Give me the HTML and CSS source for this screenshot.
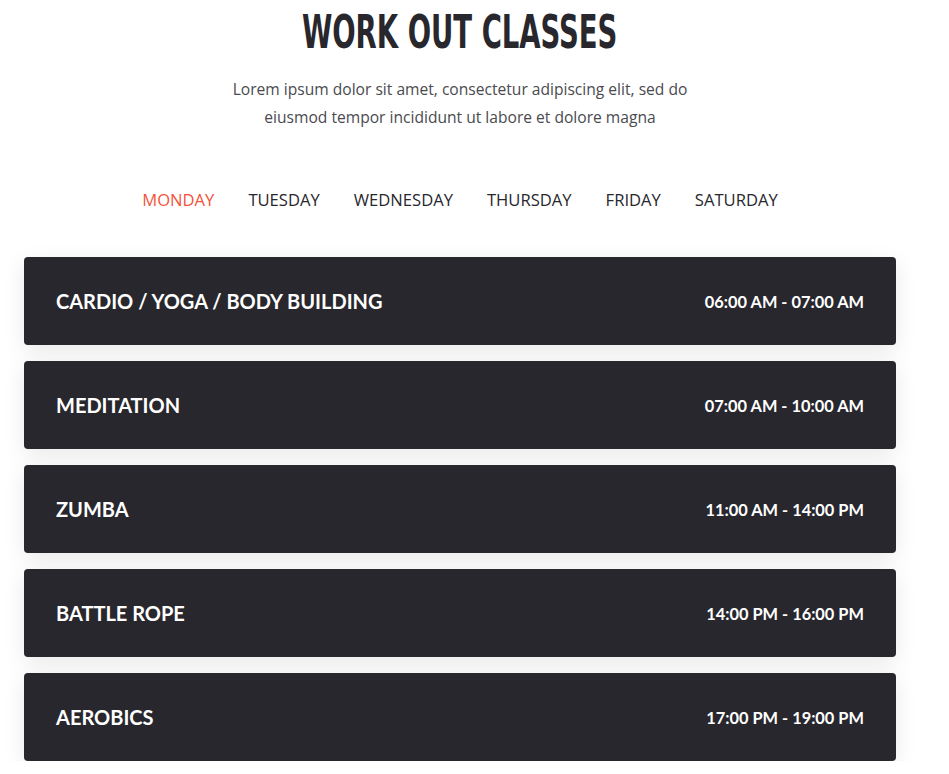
FILE: index.html
```html
<!DOCTYPE html>
<html lang="en">
<head>
<meta charset="utf-8">
<title>Work Out Classes</title>
<link rel="stylesheet" href="styles.css">
</head>
<body>
<section class="schedule">
  <header class="schedule-head">
    <h2 class="title"><span class="title-text">WORK OUT CLASSES</span></h2>
    <p class="lead">Lorem ipsum dolor sit amet, consectetur adipiscing elit, sed do<br>eiusmod tempor incididunt ut labore et dolore magna</p>
  </header>
  <nav class="days">
    <a class="day active">MONDAY</a>
    <a class="day">TUESDAY</a>
    <a class="day">WEDNESDAY</a>
    <a class="day">THURSDAY</a>
    <a class="day">FRIDAY</a>
    <a class="day">SATURDAY</a>
  </nav>
  <div class="classes">
    <div class="class-row"><span class="class-name">CARDIO / YOGA / BODY BUILDING</span><span class="class-time">06:00 AM - 07:00 AM</span></div>
    <div class="class-row"><span class="class-name">MEDITATION</span><span class="class-time">07:00 AM - 10:00 AM</span></div>
    <div class="class-row"><span class="class-name">ZUMBA</span><span class="class-time">11:00 AM - 14:00 PM</span></div>
    <div class="class-row"><span class="class-name">BATTLE ROPE</span><span class="class-time">14:00 PM - 16:00 PM</span></div>
    <div class="class-row"><span class="class-name">AEROBICS</span><span class="class-time">17:00 PM - 19:00 PM</span></div>
  </div>
</section>
</body>
</html>
```
FILE: styles.css
```css
* { box-sizing: border-box; }
html, body { margin: 0; padding: 0; background: #fff; }
body { font-family: "Open Sans", "Lato", sans-serif; color: #28272d; }

.schedule {
  width: 872px;
  margin-left: 24px;
  padding-top: 6px;
}

.schedule-head { text-align: center; }

.title {
  margin: 0;
  font-family: "Liberation Sans Narrow", "DejaVu Sans Condensed", sans-serif;
  font-weight: 700;
  font-size: 47px;
  line-height: 52px;
  color: #28272d;
}
.title-text {
  display: inline-block;
  transform: scaleX(0.65);
  transform-origin: center;
}

.lead {
  margin: 17px 0 0;
  font-size: 15.6px;
  line-height: 28px;
  color: #4a4a4f;
}

.days {
  display: flex;
  justify-content: center;
  gap: 34px;
  margin-top: 57px;
}
.day {
  font-size: 16.6px;
  line-height: 24px;
  color: #28272d;
  cursor: pointer;
}
.day.active { color: #f3533c; }

.classes {
  display: flex;
  flex-direction: column;
  gap: 16px;
  margin-top: 45px;
}
.class-row {
  display: flex;
  align-items: center;
  justify-content: space-between;
  height: 88px;
  padding: 0 32px;
  background: #28272d;
  border-radius: 4px;
  box-shadow: 0 6px 22px rgba(0, 0, 0, 0.09);
  color: #fff;
}
.class-name {
  font-family: "Lato", "Open Sans", sans-serif;
  font-weight: 700;
  font-size: 20px;
}
.class-time {
  font-family: "Lato", "Open Sans", sans-serif;
  font-weight: 700;
  font-size: 16.4px;
}
```
